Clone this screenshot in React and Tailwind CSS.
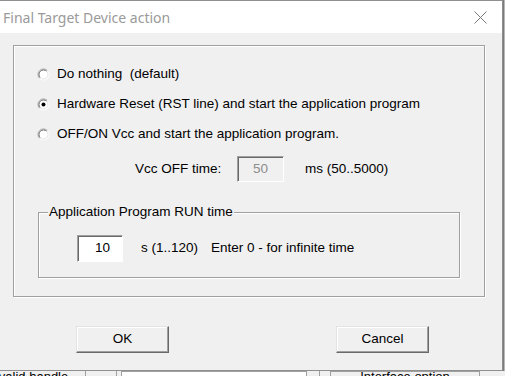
import React from 'react';

const ui = { fontFamily: '"Liberation Sans", Arial, sans-serif' };

function Radio({ checked }) {
  return (
    <svg width="13" height="13" viewBox="0 0 13 13" className="shrink-0">
      <circle cx="6.5" cy="6.5" r="5.5" fill="#fff" />
      <path d="M2.6 10.4 A5.5 5.5 0 0 1 10.4 2.6" stroke="#a0a0a0" fill="none" />
      <path d="M3.3 9.7 A4.5 4.5 0 0 1 9.7 3.3" stroke="#6e6e6e" fill="none" />
      <path d="M10.4 2.6 A5.5 5.5 0 0 1 2.6 10.4" stroke="#ffffff" fill="none" />
      <path d="M9.7 3.3 A4.5 4.5 0 0 1 3.3 9.7" stroke="#e3e3e3" fill="none" />
      {checked && <circle cx="6.5" cy="6.5" r="2" fill="#000" />}
    </svg>
  );
}

function RadioRow({ checked, children }) {
  return (
    <div className="h-[30px] flex items-center pl-[23px]">
      <Radio checked={checked} />
      <span className="ml-[7px] text-[13.5px] text-black whitespace-pre">{children}</span>
    </div>
  );
}

function Button({ children, className = '' }) {
  return (
    <button
      className={
        'w-[93px] h-[27px] bg-[#f0f0f0] text-[13.5px] text-black border border-t-[#e3e3e3] border-l-[#e3e3e3] border-b-[#696969] border-r-[#696969] shadow-[inset_-1px_-1px_0_#a0a0a0,inset_1px_1px_0_#ffffff] ' +
        className
      }
    >
      {children}
    </button>
  );
}

export default function App() {
  return (
    <div className="w-[505px] h-[376px] overflow-hidden bg-[#f0f0f0] flex flex-col" style={ui}>
      <div className="flex">
        <div className="w-[503px] h-[371px] border-t border-r border-b border-[#8f8f8f] flex flex-col">
          {/* title bar */}
          <div className="h-[32px] bg-white flex items-center justify-between pl-[3px] pr-[15px]">
            <span className="text-[14px] text-[#9a9a9a] mt-[1px]" style={{ fontFamily: '"Noto Sans", "Open Sans", sans-serif' }}>
              Final Target Device action
            </span>
            <svg width="13" height="13" viewBox="0 0 13 13">
              <path d="M0.5 0.5 L12.5 12.5 M12.5 0.5 L0.5 12.5" stroke="#7a7a7a" strokeWidth="1" />
            </svg>
          </div>

          {/* body */}
          <div className="flex-1 bg-[#f0f0f0] pt-[12px] pl-[13px]">
            <div className="w-[472px] h-[252px] border border-[#a0a0a0] shadow-[inset_1px_1px_0_#ffffff,1px_1px_0_#ffffff] pt-[13px]">
              <RadioRow>Do nothing  (default)</RadioRow>
              <RadioRow checked>Hardware Reset (RST line) and start the application program</RadioRow>
              <RadioRow>OFF/ON Vcc and start the application program.</RadioRow>

              <div className="mt-[7px] h-[26px] flex items-center pl-[121px] text-[13.5px] text-black">
                <span className="w-[102px]">Vcc OFF time:</span>
                <div className="w-[47px] h-[26px] flex items-center justify-center text-[#8d8d8d] bg-[#f0f0f0] border border-t-[#a0a0a0] border-l-[#a0a0a0] border-b-white border-r-white shadow-[inset_1px_1px_0_#696969]">
                  50
                </div>
                <span className="ml-[21px]">ms (50..5000)</span>
              </div>

              <div className="relative mt-[30px] ml-[24px] w-[422px] h-[66px] border border-[#a0a0a0] shadow-[inset_1px_1px_0_#ffffff,1px_1px_0_#ffffff] pl-[38px] pt-[22px]">
                <span className="absolute -top-[9px] left-[9px] px-[1px] bg-[#f0f0f0] text-[13.5px] leading-[16px] text-black">
                  Application Program RUN time
                </span>
                <div className="flex items-center text-[13.5px] text-black">
                  <div className="w-[46px] h-[27px] flex items-center justify-end pr-[12px] bg-white border border-t-[#a0a0a0] border-l-[#a0a0a0] border-b-white border-r-white shadow-[inset_1px_1px_0_#696969]">
                    10
                  </div>
                  <span className="ml-[18px]">s (1..120)</span>
                  <span className="ml-[13px]">Enter 0 - for infinite time</span>
                </div>
              </div>
            </div>

            <div className="flex mt-[29px] pl-[63px]">
              <Button>OK</Button>
              <Button className="ml-[167px]">Cancel</Button>
            </div>
          </div>
        </div>
        <div className="w-[2px] h-[371px] bg-[#b8b8b8] border-l border-[#7a7a7a]" />
      </div>

      {/* underlying window peeking out below */}
      <div className="h-[5px] flex items-start overflow-hidden text-[13px] leading-[13px] text-black">
        <span className="-ml-[12px] -mt-[1px] w-[97px] whitespace-nowrap">Invalid handle</span>
        <div className="w-[1px] h-[5px] bg-[#a0a0a0]" />
        <div className="w-[30px]" />
        <div className="w-[1px] h-[5px] bg-[#a0a0a0]" />
        <div className="ml-[4px] w-[186px] h-[5px] bg-white border-t border-l border-r border-[#a0a0a0]" />
        <div className="ml-[12px] w-[1px] h-[5px] bg-[#a0a0a0]" />
        <div className="ml-[10px] w-[150px] h-[5px] border-t border-l border-r border-[#a0a0a0] flex justify-center">
          <span className="-mt-[2px] whitespace-nowrap">Interface option</span>
        </div>
      </div>
    </div>
  );
}
